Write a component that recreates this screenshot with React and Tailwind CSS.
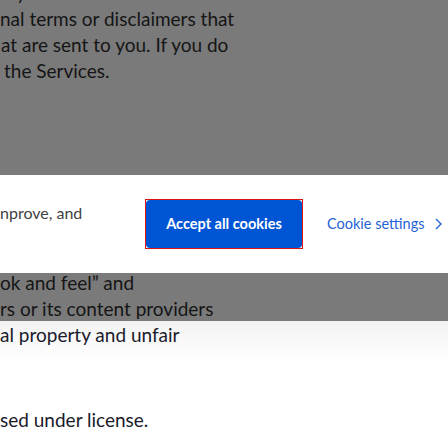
const font = { fontFamily: "Lato, 'Open Sans', sans-serif" };

function Line({ children, className = "" }) {
  return (
    <div className={"whitespace-nowrap text-[19px] leading-[26px] " + className}>
      {children}
    </div>
  );
}

export default function App() {
  return (
    <div className="h-[448px] w-[448px] overflow-hidden bg-white" style={font}>
      {/* dimmed page above banner */}
      <section className="h-[175px] overflow-hidden bg-[#7a7a7a] text-[#151515]">
        <div className="-mt-[20px]">
          <Line className="pl-[6px]">ny of</Line>
          <Line>nal terms or disclaimers that</Line>
          <Line className="pl-[1px]">at are sent to you. If you do</Line>
          <Line className="pl-[4px]">the Services.</Line>
        </div>
      </section>

      {/* cookie banner */}
      <section className="flex h-[98px] items-start bg-white">
        <p className="w-[145px] shrink-0 pt-[26px] text-[16px] leading-[24px] text-[#414141]">
          nprove, and
        </p>
        <div className="mt-[24px] h-[50px] w-[158px] shrink-0 border border-[#e01010]">
          <button
            type="button"
            className="flex h-full w-full items-center justify-center rounded-[4px] bg-[#0055d4] text-[14.5px] font-bold text-white"
          >
            Accept all cookies
          </button>
        </div>
        <a
          href="#"
          className="ml-[24px] mt-[38px] flex shrink-0 items-center gap-[10px] whitespace-nowrap text-[14.5px] leading-[22px] text-[#1f63d6]"
        >
          <span>Cookie settings</span>
          <svg width="7" height="12" viewBox="0 0 7 12" fill="none" className="shrink-0">
            <path d="M1 1l5 5-5 5" stroke="#1f63d6" strokeWidth="1.4" />
          </svg>
        </a>
      </section>

      {/* dimmed page below banner */}
      <section className="h-[48px] overflow-hidden bg-[#7a7a7a] text-[#151515]">
        <div className="-mt-[3px]">
          <Line>ok and feel” and</Line>
          <Line>rs or its content providers</Line>
        </div>
      </section>

      {/* page content */}
      <section className="bg-gradient-to-b from-[#f2f2f2] to-white to-[40px] text-[#1a1a2a]">
        <Line className="pt-[1px]">al property and unfair</Line>
        <Line className="mt-[59px]">sed under license.</Line>
      </section>
    </div>
  );
}
